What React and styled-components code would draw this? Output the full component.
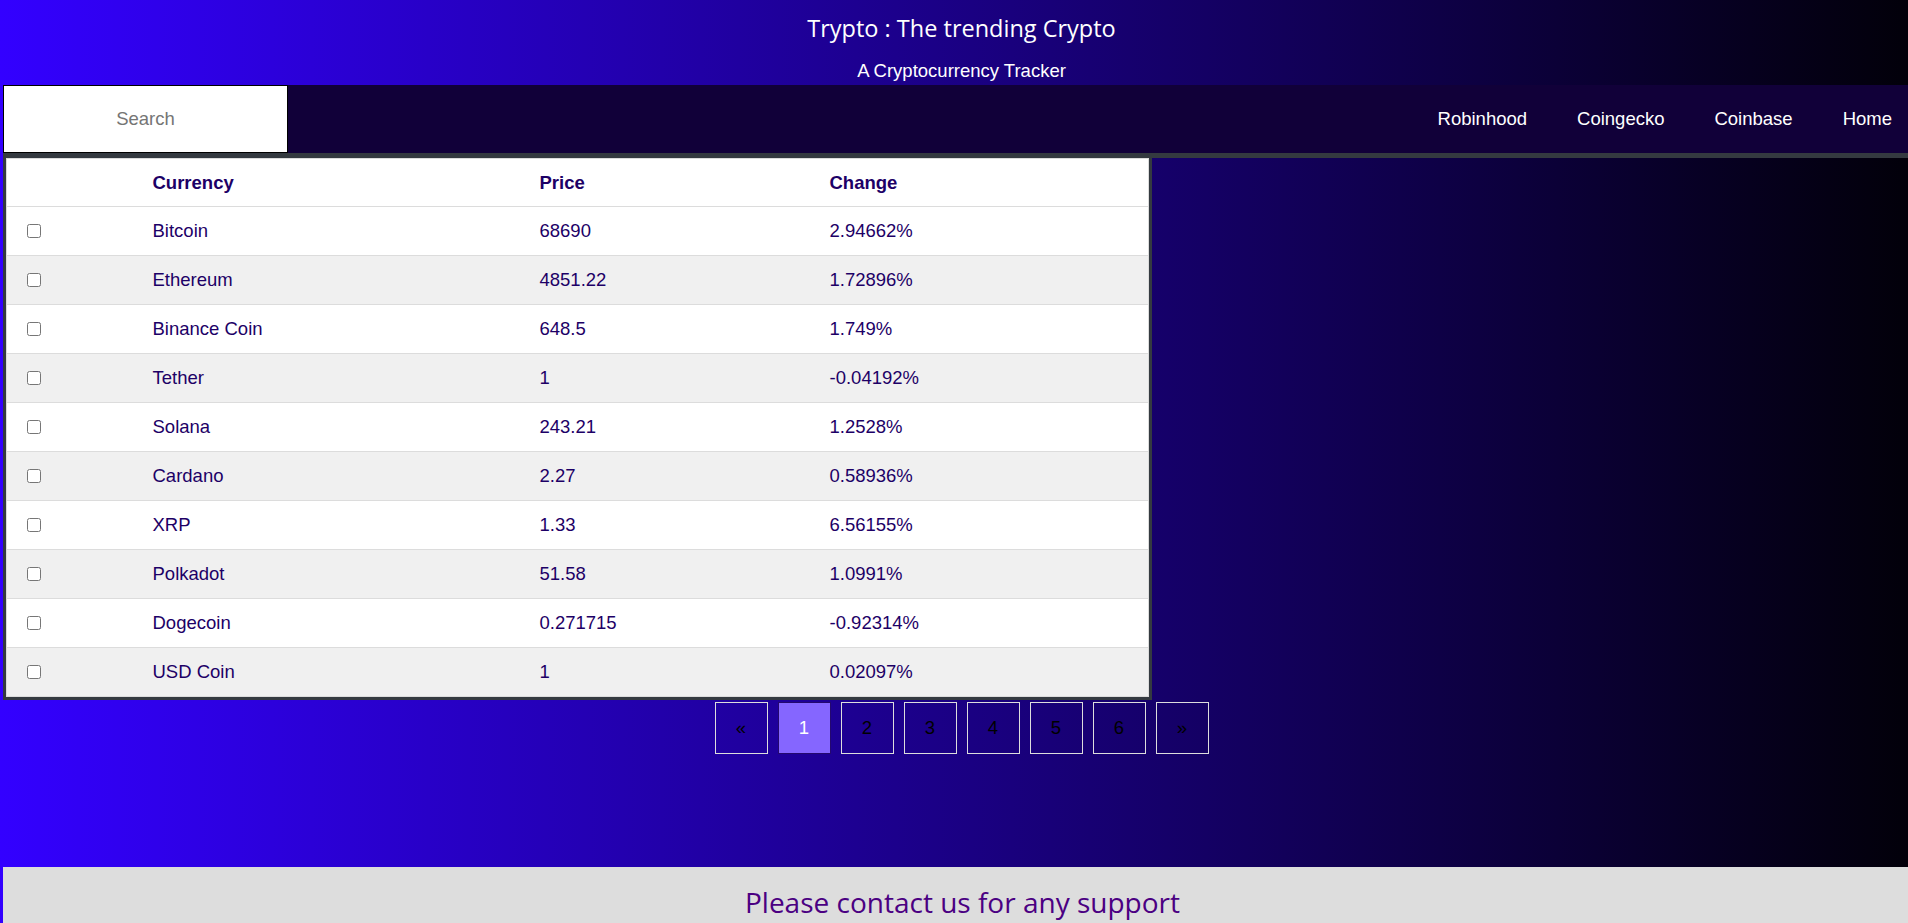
import React from "react";
import styled, { createGlobalStyle } from "styled-components";

const coins = [
    { name: "Bitcoin", price: "68690", change: "2.94662%" },
    { name: "Ethereum", price: "4851.22", change: "1.72896%" },
    { name: "Binance Coin", price: "648.5", change: "1.749%" },
    { name: "Tether", price: "1", change: "-0.04192%" },
    { name: "Solana", price: "243.21", change: "1.2528%" },
    { name: "Cardano", price: "2.27", change: "0.58936%" },
    { name: "XRP", price: "1.33", change: "6.56155%" },
    { name: "Polkadot", price: "51.58", change: "1.0991%" },
    { name: "Dogecoin", price: "0.271715", change: "-0.92314%" },
    { name: "USD Coin", price: "1", change: "0.02097%" },
];

const pages = ["«", "1", "2", "3", "4", "5", "6", "»"];

const App = () => {
    return (
        <>
            <GlobalStyle />
            <Page>
                <Header>
                    <Title>Trypto : The trending Crypto</Title>
                    <Subtitle>A Cryptocurrency Tracker</Subtitle>
                </Header>
                <Nav>
                    <SearchInput type="text" placeholder="Search" />
                    <NavLinks>
                        <NavLink href="#">Robinhood</NavLink>
                        <NavLink href="#">Coingecko</NavLink>
                        <NavLink href="#">Coinbase</NavLink>
                        <NavLink href="#">Home</NavLink>
                    </NavLinks>
                </Nav>
                <TableWrap>
                    <Table>
                        <thead>
                            <tr>
                                <Th $width="130px"></Th>
                                <Th $width="387px">Currency</Th>
                                <Th $width="290px">Price</Th>
                                <Th>Change</Th>
                            </tr>
                        </thead>
                        <tbody>
                            {coins.map((coin, i) => (
                                <Row key={coin.name} $striped={i % 2 === 1}>
                                    <Td>
                                        <Check type="checkbox" />
                                    </Td>
                                    <Td>{coin.name}</Td>
                                    <Td>{coin.price}</Td>
                                    <Td>{coin.change}</Td>
                                </Row>
                            ))}
                        </tbody>
                    </Table>
                </TableWrap>
                <Pagination>
                    {pages.map((p) => (
                        <PageItem key={p} $active={p === "1"}>
                            {p}
                        </PageItem>
                    ))}
                </Pagination>
                <Footer>Please contact us for any support</Footer>
            </Page>
        </>
    );
};

export default App;

const GlobalStyle = createGlobalStyle`
    body {
        margin: 0;
        background: linear-gradient(to right, #3300ff, #000000 104%);
        font-family: "Liberation Sans", Arial, sans-serif;
    }
`;
const Page = styled.div`
    padding-left: 3px;
    min-height: 100vh;
    display: flex;
    flex-direction: column;
`;
const Header = styled.header`
    display: flex;
    flex-direction: column;
    align-items: center;
    padding: 12px 0 3px 12px;
    color: #ffffff;
`;
const Title = styled.h1`
    margin: 0;
    font-family: "Open Sans", "Noto Sans", sans-serif;
    font-weight: 400;
    font-size: 23.5px;
    line-height: 32px;
`;
const Subtitle = styled.p`
    margin: 16px 0 0;
    font-size: 18.5px;
    line-height: 22px;
`;
const Nav = styled.nav`
    display: flex;
    align-items: stretch;
    height: 68px;
    background-color: #110039;
    border-bottom: 5px solid #343a40;
`;
const SearchInput = styled.input`
    width: 285px;
    box-sizing: border-box;
    border: 1px solid #000000;
    background: #ffffff;
    text-align: center;
    font-family: "Liberation Sans", Arial, sans-serif;
    font-size: 18.5px;
    outline: none;
    &::placeholder {
        color: #757575;
    }
`;
const NavLinks = styled.div`
    margin-left: auto;
    display: flex;
    align-items: center;
    gap: 50px;
    padding-right: 16px;
`;
const NavLink = styled.a`
    color: #ffffff;
    text-decoration: none;
    font-size: 18.5px;
`;
const TableWrap = styled.div`
    width: 60%;
    border: 3px solid #343a40;
    border-top: 0;
`;
const Table = styled.table`
    width: 100%;
    border-collapse: collapse;
    table-layout: fixed;
    background: #ffffff;
    border: 1px solid #dcdcdc;
    color: #1d0066;
    font-size: 18.5px;
`;
const Th = styled.th`
    box-sizing: border-box;
    width: ${(props) => props.$width || "auto"};
    text-align: left;
    font-weight: 700;
    padding: 0 16px;
    line-height: 47px;
    border-bottom: 1px solid #dcdcdc;
`;
const Row = styled.tr`
    background-color: ${(props) => (props.$striped ? "#f0f0f0" : "#ffffff")};
    border-bottom: 1px solid #dcdcdc;
`;
const Td = styled.td`
    padding: 0 16px;
    line-height: 48px;
`;
const Check = styled.input`
    margin: 0 0 0 4px;
    width: 14px;
    height: 14px;
    vertical-align: -1px;
`;
const Pagination = styled.ul`
    list-style: none;
    display: flex;
    justify-content: center;
    gap: 10px;
    margin: 2px 0 0;
    padding: 0 0 0 12px;
`;
const PageItem = styled.li`
    width: 53px;
    height: 52px;
    box-sizing: border-box;
    display: flex;
    align-items: center;
    justify-content: center;
    border: 1px solid ${(props) => (props.$active ? "#24086e" : "#dddddd")};
    background-color: ${(props) => (props.$active ? "#8566ff" : "transparent")};
    color: ${(props) => (props.$active ? "#ffffff" : "#000000")};
    font-size: 18.5px;
    cursor: pointer;
`;
const Footer = styled.footer`
    margin-top: 113px;
    background-color: #dddddd;
    padding: 15px 0 30px 14px;
    text-align: center;
    font-family: "Open Sans", "Noto Sans", sans-serif;
    font-size: 28px;
    line-height: 40px;
    color: #4b0082;
`;
